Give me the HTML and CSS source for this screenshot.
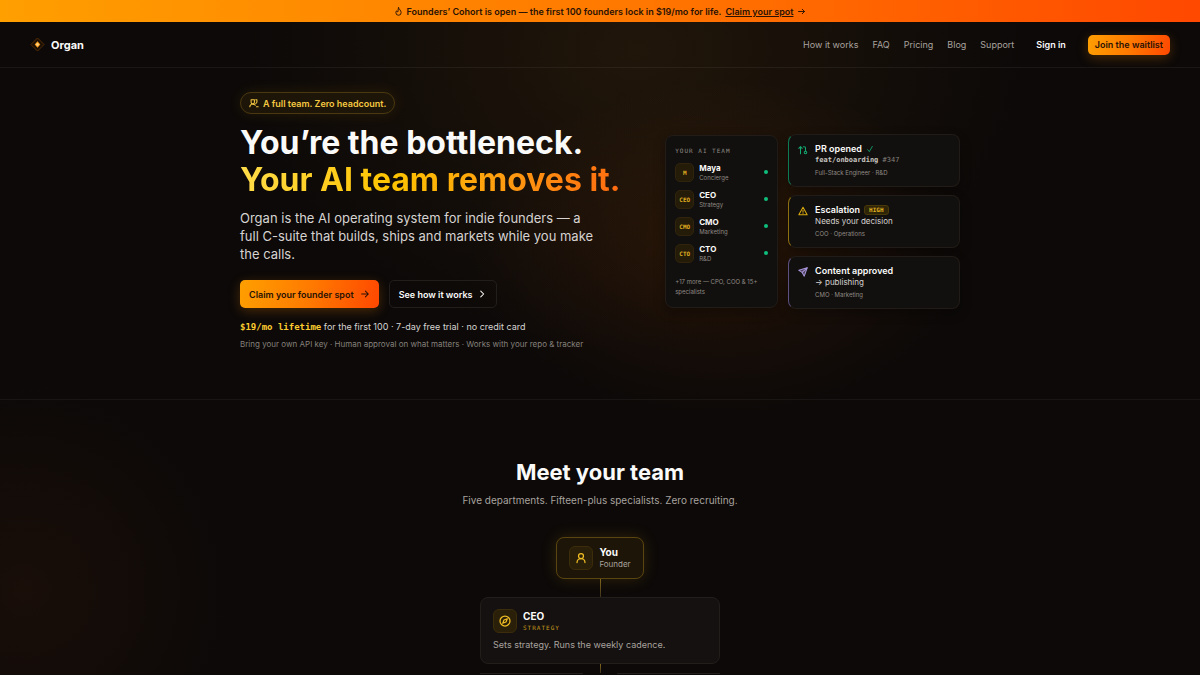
FILE: index.html
```html
<!DOCTYPE html>
<html lang="en">
  <head>
    <meta charset="UTF-8" />
    <meta name="viewport" content="width=device-width, initial-scale=1.0" />
    <title>Organ</title>
    <link rel="stylesheet" href="styles.css">
  </head>
  <body>
    <div class="banner">
      <svg class="icon" viewBox="0 0 24 24"><path d="M12 2c1 4 7 7 7 13a7 7 0 0 1-14 0c0-2 1-4 2-5 0 2 1 3 3 3 2-2 0-6 2-11z"/></svg>
      <span>Founders’ Cohort is open — the first 100 founders lock in $19/mo for life.</span>
      <a href="#claim">Claim your spot</a>
      <svg class="icon" viewBox="0 0 24 24"><path d="M4 12h16M14 6l6 6-6 6"/></svg>
    </div>

    <header class="nav">
      <a class="logo" href="#">
        <svg viewBox="0 0 32 32">
          <path d="M16 2l14 14-14 14L2 16z" fill="#1c1004" stroke="#5a3006" stroke-width="2"/>
          <path d="M16 9l6 7-6 7-6-7z" fill="#ff9a1a"/>
          <circle cx="16" cy="16" r="3" fill="#ffd27a"/>
        </svg>
        Organ
      </a>
      <nav class="links">
        <a href="#how">How it works</a>
        <a href="#faq">FAQ</a>
        <a href="#pricing">Pricing</a>
        <a href="#blog">Blog</a>
        <a href="#support">Support</a>
      </nav>
      <a class="signin" href="#signin">Sign in</a>
      <button class="btn btn-small">Join the waitlist</button>
    </header>

    <main>
      <section class="hero">
        <div class="intro">
          <div class="pill">
            <svg class="icon" viewBox="0 0 24 24"><path d="M5 4h8v6a4 4 0 0 1-8 0zM2 21c0-4 3-6 7-6s5 1 6 2M16 4h3v6a4 4 0 0 1-3 3M18 21h4"/></svg>
            A full team. Zero headcount.
          </div>
          <h1>You’re the bottleneck.<br><span class="gradient">Your AI team removes it.</span></h1>
          <p class="lead">Organ is the AI operating system for indie founders — a full C-suite that builds, ships and markets while you make the calls.</p>
          <div class="actions">
            <button class="btn btn-large" id="claim">Claim your founder spot
              <svg class="icon" viewBox="0 0 24 24"><path d="M4 12h16M13 5l7 7-7 7"/></svg>
            </button>
            <button class="btn-ghost">See how it works
              <svg class="icon" viewBox="0 0 24 24"><path d="M9 5l7 7-7 7"/></svg>
            </button>
          </div>
          <p class="offer"><strong>$19/mo lifetime</strong> for the first 100 · 7-day free trial · no credit card</p>
          <p class="note">Bring your own API key · Human approval on what matters · Works with your repo &amp; tracker</p>
        </div>

        <div class="preview">
          <div class="team">
            <h2>YOUR AI TEAM</h2>
            <ul>
              <li><span class="avatar">M</span><div><b>Maya</b><small>Concierge</small></div><i class="dot"></i></li>
              <li><span class="avatar">CEO</span><div><b>CEO</b><small>Strategy</small></div><i class="dot"></i></li>
              <li><span class="avatar">CMO</span><div><b>CMO</b><small>Marketing</small></div><i class="dot"></i></li>
              <li><span class="avatar">CTO</span><div><b>CTO</b><small>R&amp;D</small></div><i class="dot"></i></li>
            </ul>
            <p>+17 more — CPO, COO &amp; 15+ specialists</p>
          </div>
          <div class="feed">
            <article class="event green">
              <svg class="icon" viewBox="0 0 24 24"><path d="M6 21V4M2 8l4-4 4 4M13 4h2a3 3 0 0 1 3 3v7"/><circle cx="18" cy="18" r="3"/></svg>
              <div>
                <h3>PR opened <svg class="icon check" viewBox="0 0 24 24"><path d="M5 14l5 6L19 4"/></svg></h3>
                <p class="code"><b>feat/onboarding</b> #347</p>
                <small>Full-Stack Engineer · R&amp;D</small>
              </div>
            </article>
            <article class="event yellow">
              <svg class="icon" viewBox="0 0 24 24"><path d="M12 3L2 21h20zM12 10v5M12 18v0"/></svg>
              <div>
                <h3>Escalation <span class="tag">HIGH</span></h3>
                <p>Needs your decision</p>
                <small>COO · Operations</small>
              </div>
            </article>
            <article class="event purple">
              <svg class="icon" viewBox="0 0 24 24"><path d="M22 2L2 8l8 5 5 9z" fill="currentColor" fill-opacity="0.4"/><path d="M22 2L10 13"/></svg>
              <div>
                <h3>Content approved</h3>
                <p>→ publishing</p>
                <small>CMO · Marketing</small>
              </div>
            </article>
          </div>
        </div>
      </section>

      <section class="org">
        <h2>Meet your team</h2>
        <p class="sub">Five departments. Fifteen-plus specialists. Zero recruiting.</p>
        <div class="you">
          <span class="badge"><svg class="icon" viewBox="0 0 24 24"><circle cx="12" cy="8" r="5"/><path d="M4 21a8 8 0 0 1 16 0"/></svg></span>
          <div><b>You</b><small>Founder</small></div>
        </div>
        <div class="line"></div>
        <div class="ceo">
          <div class="ceo-head">
            <span class="badge"><svg class="icon" viewBox="0 0 24 24"><circle cx="12" cy="12" r="10"/><path d="M16.500 7.500l-2.500 6.500-6.500 2.500 2.500-6.500z"/></svg></span>
            <div><b>CEO</b><small>STRATEGY</small></div>
          </div>
          <p>Sets strategy. Runs the weekly cadence.</p>
        </div>
        <div class="line short"></div>
        <div class="departments">
          <div></div>
          <div></div>
        </div>
      </section>
    </main>
  </body>
</html>
```

FILE: styles.css
```css
* {
  box-sizing: border-box;
}
body {
  display: flex;
  flex-direction: column;
  margin: 0;
  min-height: 100vh;
  font-family: Inter, "Liberation Sans", sans-serif;
  color: #fafaf9;
  background:
    radial-gradient(circle at 2% 590px, rgba(120, 50, 10, 0.12), transparent 210px),
    radial-gradient(ellipse 250px 170px at 60% 250px, rgba(190, 80, 0, 0.13), transparent),
    radial-gradient(ellipse 390px 300px at 53% 50px, rgba(150, 95, 20, 0.15), transparent),
    #0c0908;
}
h1,
h2,
h3,
p,
ul {
  margin: 0;
  padding: 0;
}
a {
  color: inherit;
  text-decoration: none;
}
button {
  font-family: inherit;
  cursor: pointer;
}
b,
small {
  display: block;
}
.icon {
  width: 10px;
  height: 10px;
  flex: none;
  fill: none;
  stroke: currentColor;
  stroke-width: 2.5;
  stroke-linecap: round;
  stroke-linejoin: round;
}

/* top bar */
.banner {
  display: flex;
  align-items: center;
  justify-content: center;
  gap: 4px;
  height: 22px;
  font-size: 9px;
  font-weight: 600;
  color: #2a1204;
  background: linear-gradient(90deg, #ff9f00, #ff7a00 50%, #ff4800);
}
.banner a {
  text-decoration: underline;
}
.banner .icon {
  width: 9px;
  height: 9px;
}

.nav {
  display: flex;
  align-items: center;
  height: 46px;
  padding: 0 30px;
  border-bottom: 1px solid rgba(255, 255, 255, 0.06);
  font-size: 9px;
}
.logo {
  display: flex;
  align-items: center;
  gap: 6px;
  margin-right: auto;
  font-size: 11px;
  font-weight: 700;
}
.logo svg {
  width: 15px;
  height: 15px;
}
.links {
  display: flex;
  gap: 14px;
  color: #a8a29e;
}
.signin {
  margin: 0 22px;
  font-weight: 600;
}
.btn {
  display: flex;
  align-items: center;
  gap: 6px;
  border: 0;
  border-radius: 5px;
  font-size: 9px;
  font-weight: 600;
  color: #2a1204;
  background: linear-gradient(100deg, #ff9f00, #ff7a00 50%, #ff4800);
  box-shadow: 0 3px 12px rgba(255, 140, 0, 0.25);
}
.btn-small {
  height: 20px;
  padding: 0 7px;
}
.btn-large {
  height: 28px;
  padding: 0 9px;
}
.btn-ghost {
  display: flex;
  align-items: center;
  gap: 4px;
  height: 28px;
  padding: 0 9px;
  border: 1px solid #211e1c;
  border-radius: 5px;
  font-size: 9px;
  font-weight: 600;
  color: #fafaf9;
  background: transparent;
}

/* hero */
.hero {
  display: grid;
  grid-template-columns: 1.3fr 1fr;
  gap: 42px;
  align-items: center;
  padding: 24px 20% 49px;
  border-bottom: 1px solid rgba(255, 255, 255, 0.05);
}
.hero > * {
  min-width: 0;
}
.pill {
  display: inline-flex;
  align-items: center;
  gap: 4px;
  height: 22px;
  padding: 0 8px;
  border: 1px solid #4a3810;
  border-radius: 11px;
  font-size: 9px;
  font-weight: 600;
  color: #f5c842;
  background: #1d1507;
  box-shadow: 0 0 14px rgba(250, 190, 20, 0.1);
}
h1 {
  margin-top: 10px;
  font-size: 32px;
  line-height: 37px;
  font-weight: 700;
  white-space: nowrap;
}
.gradient {
  color: transparent;
  background: linear-gradient(100deg, #ffdc4a, #ffc400 40%, #ff9a10 70%, #ff6a10);
  background-clip: text;
  -webkit-background-clip: text;
}
.lead {
  max-width: 360px;
  margin-top: 11px;
  font-size: 13px;
  line-height: 18px;
  color: #d6d3d1;
}
.actions {
  display: flex;
  gap: 10px;
  margin: 17px 0 12px;
}
.offer {
  font-size: 9px;
  line-height: 14px;
  color: #d6d3d1;
}
.offer strong {
  font-family: "DejaVu Sans Mono", monospace;
  color: #fccb2e;
}
.note {
  margin-top: 4px;
  font-size: 8px;
  line-height: 12px;
  color: #85807b;
}

.preview {
  display: grid;
  grid-template-columns: 113fr 172fr;
  gap: 10px;
  align-items: center;
}
.team,
.event {
  border: 1px solid #211c18;
  border-radius: 8px;
  background: #12100e;
  box-shadow: 0 4px 12px rgba(0, 0, 0, 0.3);
}
.team {
  padding: 10px 9px;
}
.team h2 {
  font-family: "DejaVu Sans Mono", monospace;
  font-size: 6px;
  line-height: 10px;
  font-weight: 400;
  letter-spacing: 1px;
  color: #8f8a85;
}
.team ul {
  display: grid;
  gap: 8px;
  margin-top: 7px;
  list-style: none;
}
.team li {
  display: flex;
  align-items: center;
  gap: 5px;
  font-size: 8px;
  line-height: 10px;
}
.team small,
.event small {
  font-size: 6px;
  line-height: 9px;
  color: #8f8a85;
}
.avatar {
  display: grid;
  place-items: center;
  width: 19px;
  height: 19px;
  border: 1px solid #30240d;
  border-radius: 5px;
  font: bold 6px "DejaVu Sans Mono", monospace;
  color: #e0b020;
  background: #241b09;
}
.dot {
  width: 4px;
  height: 4px;
  margin-left: auto;
  border-radius: 50%;
  background: #0fbf7c;
}
.team p {
  margin-top: 14px;
  font-size: 6px;
  line-height: 10px;
  color: #8f8a85;
}

.feed {
  display: grid;
  gap: 8px;
}
.event {
  display: flex;
  gap: 7px;
  padding: 8px 9px;
}
.event > .icon {
  margin-top: 2px;
}
.event div {
  color: #fafaf9;
}
.event h3 {
  display: flex;
  align-items: center;
  gap: 4px;
  font-size: 9px;
  line-height: 12px;
  font-weight: 600;
}
.event p {
  font-size: 8px;
  line-height: 11px;
  color: #d6d3d1;
}
.event small {
  margin-top: 2px;
  line-height: 10px;
}
.event .code {
  font-family: "DejaVu Sans Mono", monospace;
  font-size: 7px;
  color: #85807b;
}
.code b {
  display: inline;
  color: #c9c5c1;
}
.green {
  color: #12a870;
  border-left-color: #0e7a54;
}
.check {
  width: 8px;
  height: 8px;
  color: #12a870;
}
.yellow {
  color: #d9a90f;
  border-left-color: #8f7010;
}
.purple {
  color: #a794d8;
  border-left-color: #5e5080;
}
.tag {
  padding: 0 4px;
  border: 1px solid #493909;
  border-radius: 3px;
  font: bold 6px/8px "DejaVu Sans Mono", monospace;
  color: #e0b020;
  background: #2e2408;
}

/* org chart */
main,
.org {
  display: flex;
  flex-direction: column;
  flex: 1;
}
.org {
  align-items: center;
  padding-top: 56px;
}
.org h2 {
  font-size: 22px;
  line-height: 32px;
  font-weight: 700;
}
.sub {
  margin-top: 4px;
  font-size: 10px;
  line-height: 16px;
  color: #a8a29e;
}
.badge {
  display: grid;
  place-items: center;
  width: 24px;
  height: 24px;
  border: 1px solid #3b2c0b;
  border-radius: 6px;
  color: #f0bd24;
  background: #2a1f08;
}
.badge .icon {
  width: 12px;
  height: 12px;
}
.you,
.ceo-head {
  display: flex;
  align-items: center;
  gap: 6px;
}
.you {
  margin-top: 29px;
  padding: 8px 12px;
  border: 1px solid #5a4510;
  border-radius: 8px;
  background: #1d1507;
  box-shadow: 0 0 16px rgba(250, 190, 20, 0.15);
}
.you b,
.ceo b {
  font-size: 10px;
  line-height: 13px;
}
.you small {
  font-size: 8px;
  line-height: 11px;
  color: #a8a29e;
}
.line {
  width: 1px;
  height: 18px;
  background: linear-gradient(#82671a, #3d321c);
}
.line.short {
  height: 9px;
}
.ceo {
  width: 240px;
  padding: 11px 12px;
  border: 1px solid #211e1c;
  border-radius: 8px;
  background: #141110;
}
.ceo small {
  font: 6px/10px "DejaVu Sans Mono", monospace;
  letter-spacing: 1px;
  color: #c79b1b;
}
.ceo p {
  margin-top: 5px;
  font-size: 9px;
  line-height: 14px;
  color: #a8a29e;
}
.departments {
  display: grid;
  grid-template-columns: 1fr 1fr;
  gap: 34px;
  flex: 1;
  width: 240px;
}
.departments div {
  border-top: 1px solid #211e1c;
}
```
